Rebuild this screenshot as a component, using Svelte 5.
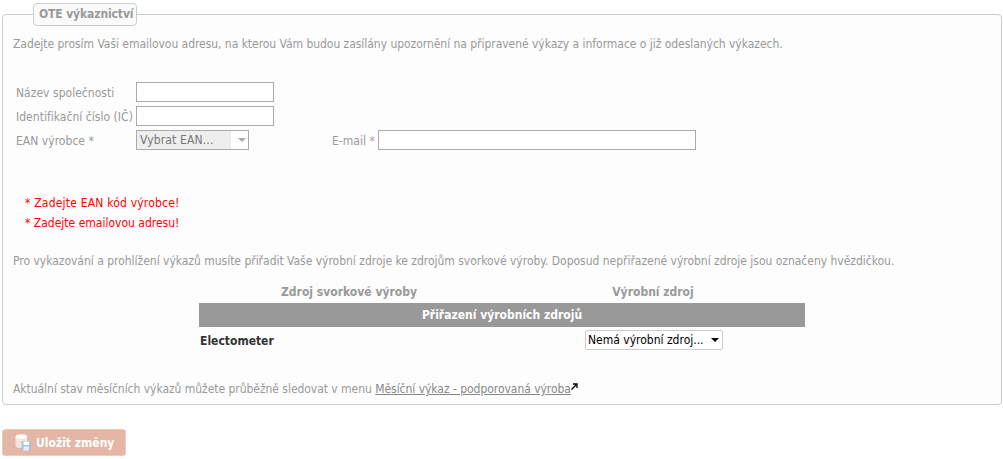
<script>
  const rows = [
    { label: 'Název společnosti' },
    { label: 'Identifikační číslo (IČ)' }
  ];
</script>

<div class="page">
  <fieldset class="box">
    <legend>OTE výkaznictví</legend>
    <p class="intro">Zadejte prosím Vaši emailovou adresu, na kterou Vám budou zasílány upozornění na připravené výkazy a informace o již odeslaných výkazech.</p>

    <div class="form">
      {#each rows as r}
        <div class="row">
          <span class="lbl">{r.label}</span>
          <input class="inp" type="text" />
        </div>
      {/each}
      <div class="row">
        <span class="lbl">EAN výrobce *</span>
        <div class="ean">
          <span class="ean-val">Vybrat EAN...</span>
          <span class="ean-arrow"></span>
        </div>
        <span class="lbl email-lbl">E-mail <span class="star">*</span></span>
        <input class="inp email" type="text" />
      </div>
    </div>

    <ul class="errors">
      <li class="wide">* Zadejte EAN kód výrobce!</li>
      <li>* Zadejte emailovou adresu!</li>
    </ul>

    <p class="note">Pro vykazování a prohlížení výkazů musíte přiřadit Vaše výrobní zdroje ke zdrojům svorkové výroby. Doposud nepřiřazené výrobní zdroje jsou označeny hvězdičkou.</p>

    <div class="assign">
      <div class="heads">
        <span>Zdroj svorkové výroby</span>
        <span>Výrobní zdroj</span>
      </div>
      <div class="band">Přiřazení výrobních zdrojů</div>
      <div class="assign-row">
        <strong>Electometer</strong>
        <div class="sel">
          <span>Nemá výrobní zdroj...</span>
          <span class="sel-arrow"></span>
        </div>
      </div>
    </div>

    <p class="foot">Aktuální stav měsíčních výkazů můžete průběžně sledovat v menu <a href="#top">Měsíční výkaz - podporovaná výroba</a><svg class="ext" width="7" height="7" viewBox="0 0 7 7"><path d="M0.5 6.5 L5 2 M2 1 H6 V5" fill="none" stroke="#000" stroke-width="1.3"/></svg></p>
  </fieldset>

  <button class="save" type="button">
    <svg width="17" height="17" viewBox="0 0 17 17">
      <rect x="0.5" y="2" width="11.5" height="10" fill="#f6e6e0"/>
      <ellipse cx="6.2" cy="12" rx="5.7" ry="2" fill="#f6e6e0"/>
      <ellipse cx="6.2" cy="2.4" rx="5.7" ry="2.2" fill="#fff"/>
      <rect x="6.5" y="7" width="9.5" height="9.5" rx="1" fill="#a9c3dc"/>
      <rect x="8.5" y="7.6" width="5.5" height="3.4" fill="#fff"/>
      <rect x="8.5" y="12.5" width="5.5" height="4" fill="#e8eef4"/>
    </svg>
    Uložit změny
  </button>
</div>

<style>
  :global(body) {
    margin: 0;
    background: #fff;
  }
  .page {
    width: 1003px;
    height: 459px;
    overflow: hidden;
    box-sizing: border-box;
    padding-top: 3px;
    font-family: "DejaVu Sans", sans-serif;
    font-stretch: condensed;
    font-size: 12px;
    color: #999;
  }
  .box {
    box-sizing: border-box;
    width: 1000px;
    height: 402px;
    margin: 0 0 0 2px;
    padding: 0 10px;
    border: 1px solid #ccc;
    border-radius: 4px;
    background: #fdfdfd;
    min-width: 0;
  }
  legend {
    margin-left: 20px;
    padding: 0 5px;
    height: 21px;
    line-height: 21px;
    box-sizing: content-box;
    width: 92px;
    border: 1px solid #ccc;
    border-radius: 4px;
    background: #fafafa;
    font-weight: bold;
    color: #999;
    white-space: nowrap;
    letter-spacing: -0.12px;
  }
  p { margin: 0; white-space: nowrap; }
  .intro { margin-top: 10px; line-height: 16px; letter-spacing: -0.04px; }
  .form { margin-top: 28px; padding-left: 3px; }
  .row {
    display: flex;
    align-items: center;
    height: 24px;
  }
  .lbl { width: 120px; flex: none; white-space: nowrap; padding-top: 2px; letter-spacing: 0.03px; }
  .inp {
    box-sizing: border-box;
    width: 138px;
    height: 20px;
    margin: 0;
    padding: 0;
    border: 1px solid #aaa;
    background: #fff;
    flex: none;
  }
  .ean {
    box-sizing: border-box;
    width: 113px;
    height: 20px;
    border: 1px solid #aaa;
    background: #fff;
    display: flex;
    align-items: center;
    position: relative;
    color: #777;
  }
  .ean-val {
    background: #eee;
    width: 94px;
    height: 18px;
    line-height: 18px;
    padding-left: 3px;
    box-sizing: border-box;
    white-space: nowrap;
    letter-spacing: 0.15px;
  }
  .ean-arrow {
    margin-left: 7px;
    border-left: 4px solid transparent;
    border-right: 4px solid transparent;
    border-top: 4px solid #aaa;
  }
  .email-lbl { width: auto; margin-left: 83px; margin-right: 3px; }
  .star { color: #b9a; }
  .email { width: 318px; }
  .errors {
    list-style: none;
    margin: 41px 0 0;
    padding: 0 0 0 12px;
    color: #f00;
  }
  .errors li { height: 20px; line-height: 20px; }
  .errors .wide { letter-spacing: 0.2px; }
  .note { margin-top: 20px; line-height: 16px; letter-spacing: -0.02px; }
  .assign { width: 606px; margin: 13px 0 0 186px; }
  .heads {
    display: grid;
    grid-template-columns: 300px 1fr;
    height: 21px;
    line-height: 20px;
    font-weight: bold;
    text-align: center;
  }
  .heads span:last-child { padding-left: 2px; }
  .band {
    height: 24px;
    line-height: 24px;
    background: #999;
    color: #fff;
    font-weight: bold;
    text-align: center;
  }
  .assign-row {
    display: flex;
    align-items: center;
    height: 26px;
    padding-left: 1px;
    color: #333;
  }
  .assign-row strong { width: 385px; padding-top: 2px; }
  .sel {
    box-sizing: border-box;
    width: 138px;
    height: 20px;
    border: 1px solid #ccc;
    border-radius: 2px;
    background: #fff;
    color: #000;
    display: flex;
    align-items: center;
    padding-left: 2px;
    white-space: nowrap;
  }
  .sel-arrow {
    margin-left: 7px;
    border-left: 4px solid transparent;
    border-right: 4px solid transparent;
    border-top: 4px solid #000;
  }
  .foot { margin-top: 28px; line-height: 16px; letter-spacing: -0.04px; }
  .foot a { color: #888; text-decoration: underline; }
  .ext { vertical-align: 3px; }
  .save {
    display: flex;
    align-items: center;
    gap: 4px;
    margin: 24px 0 0 2px;
    box-sizing: border-box;
    width: 124px;
    height: 27px;
    padding: 0 0 0 12px;
    border: 1px solid #f0cdb0;
    border-radius: 3px;
    background: #e5b5a5;
    color: #fff;
    font: inherit;
    font-weight: bold;
  }
</style>
